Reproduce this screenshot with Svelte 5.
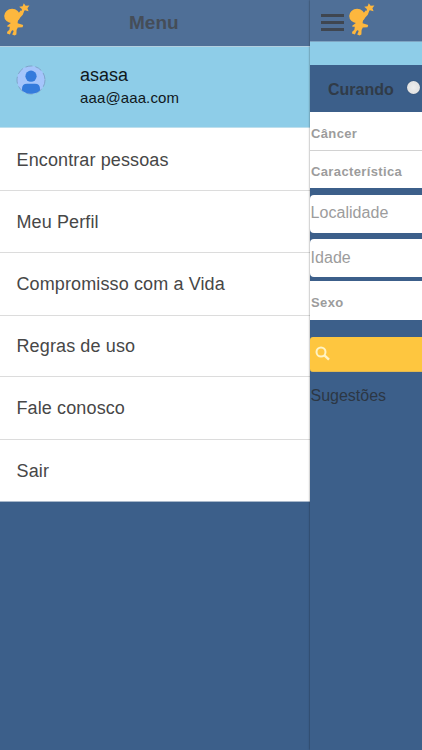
<script>
  const items = [
    { label: 'Encontrar pessoas', height: 63 },
    { label: 'Meu Perfil', height: 62 },
    { label: 'Compromisso com a Vida', height: 63 },
    { label: 'Regras de uso', height: 61 },
    { label: 'Fale conosco', height: 63 },
    { label: 'Sair', height: 62 }
  ];
</script>

{#snippet mascot()}
  <svg class="mascot" width="26" height="34" viewBox="0 0 26 34" fill="#fdb73e">
    <path d="M19.8 0.2 L21.6 2.8 L25.4 2.4 L23.4 5.2 L24.6 8.2 L21 7.3 L18 9.4 L17.8 6 L15.2 3.8 L18.6 3.2 Z" />
    <ellipse cx="8.1" cy="12.9" rx="7.9" ry="7.1" />
    <path d="M12.5 13 L16.6 7.4 L20.2 8 L18.8 11.8 L14 17 L13.6 20.2 L19.2 22.1 L18.6 24.2 L13.8 24.6 L12.6 27 L12.4 31.4 L10.6 32.4 L8.2 31.4 L9.6 28.4 L9 27 L7.5 28 L5.9 31.4 L3 30.6 L3.2 28.8 L5.4 26.8 L5.8 23.8 L3.4 23.8 L3.2 22.8 L6.6 20.3 L6.2 18 Z" />
  </svg>
{/snippet}

<div class="app">
  <aside class="drawer">
    <header class="menu-head">
      {@render mascot()}
      <h1>Menu</h1>
    </header>
    <div class="profile">
      <svg class="avatar" width="30" height="30" viewBox="0 0 30 30">
        <defs><clipPath id="disc"><circle cx="15" cy="15" r="13.8" /></clipPath></defs>
        <circle cx="15" cy="15" r="14" fill="#a5c5fb" stroke="#7293b8" stroke-width=".7" stroke-dasharray="7 3" />
        <g clip-path="url(#disc)" fill="#347bdc">
          <circle cx="15" cy="11.2" r="5.6" />
          <path d="M6 30 V24 Q6 18.8 11 18.8 H19 Q24 18.8 24 24 V30 Z" />
        </g>
      </svg>
      <div class="who">
        <span class="name">asasa</span>
        <span class="mail">aaa@aaa.com</span>
      </div>
    </div>
    <nav>
      {#each items as item}
        <div class="item" style="height: {item.height}px"><span>{item.label}</span></div>
      {/each}
    </nav>
  </aside>

  <main class="page">
    <header class="page-head">
      <div class="bars"><i></i><i></i><i></i></div>
      {@render mascot()}
    </header>
    <div class="strip"></div>
    <div class="title"><span>Curando</span><i class="knob"></i></div>
    <div class="field cancer"><b>Câncer</b></div>
    <div class="field feature"><b>Característica</b></div>
    <div class="field input"><span>Localidade</span></div>
    <div class="field input second"><span>Idade</span></div>
    <div class="field sex"><b>Sexo</b></div>
    <div class="search">
      <svg width="16" height="16" viewBox="0 0 16 16" fill="none" stroke="#fff3c4">
        <circle cx="6" cy="6" r="4.5" stroke-width="2" />
        <path d="M9.2 9.2 L14 13.6" stroke-width="2.4" />
      </svg>
    </div>
    <div class="suggest"><span>Sugestões</span></div>
  </main>
</div>

<style>
  :global(body) { margin: 0; }
  .app {
    display: flex;
    width: 422px;
    height: 750px;
    overflow: hidden;
    background: #3c5f8a;
    font-family: "Liberation Sans", Arial, sans-serif;
  }
  .app * { box-sizing: border-box; }
  .mascot { display: block; flex: none; }
  .drawer { width: 310px; flex: none; }
  .menu-head {
    height: 47px;
    display: flex;
    align-items: flex-start;
    padding: 3px 0 0 4px;
    background: #4f6f97;
    border-bottom: 1px solid #b3cfdf;
  }
  h1 {
    margin: 8px 0 0 99px;
    font-size: 19px;
    line-height: 24px;
    font-weight: bold;
    color: #454d58;
  }
  .profile {
    height: 81px;
    display: flex;
    align-items: flex-start;
    padding: 18px 0 0 16px;
    background: #8ecde8;
    border-bottom: 1px solid #bedfed;
    color: #10181c;
  }
  .who { display: flex; flex-direction: column; margin-left: 34px; }
  .name { font-size: 18px; line-height: 22px; margin-top: -1px; }
  .mail { font-size: 15px; line-height: 20px; margin-top: 2px; letter-spacing: 0.12px; }
  .item {
    display: flex;
    align-items: center;
    padding: 1px 0 0 16.5px;
    background: #fff;
    border-bottom: 1px solid #dcdcdc;
    font-size: 18px;
    letter-spacing: 0.12px;
    color: #474747;
    white-space: nowrap;
  }
  .item:first-child { padding-top: 2px; }
  .item:last-child { border-bottom-color: #a9b8ca; }
  .page {
    width: 112px;
    flex: none;
    height: 750px;
    background: #3c5f8a;
    box-shadow: 0 0 2px rgba(0, 0, 0, 0.5);
  }
  .page-head {
    height: 42px;
    display: flex;
    align-items: flex-start;
    padding: 3px 0 0 11px;
    background: #4f6f97;
    border-bottom: 1px solid #7fa5c2;
  }
  .bars {
    width: 23px;
    display: flex;
    flex-direction: column;
    gap: 4.5px;
    margin: 11px 5px 0 0;
  }
  .bars i { height: 2.5px; background: #3f4650; }
  .strip { height: 23px; background: #8ecde8; }
  .title {
    height: 47px;
    display: flex;
    align-items: flex-start;
    padding: 16px 0 0 18px;
    font-size: 16px;
    line-height: 18px;
    font-weight: bold;
    color: #303b48;
  }
  .title span { width: 79px; flex: none; }
  .knob {
    flex: none;
    width: 13px;
    height: 13px;
    border-radius: 50%;
    background: radial-gradient(#eee, #dcdcdc);
    box-shadow: 0 0 1px #26384c;
  }
  .field {
    display: flex;
    align-items: center;
    padding-left: 1px;
    background: #fff;
    color: #9c9c9c;
    font-size: 13px;
    letter-spacing: 0.37px;
    white-space: nowrap;
  }
  .cancer { height: 39px; padding-top: 5px; border-bottom: 1px solid #d2d2d2; }
  .feature { height: 37px; padding-top: 3px; }
  .input {
    height: 38px;
    margin-top: 7px;
    padding-left: 0.5px;
    padding-bottom: 2px;
    border-radius: 4px 0 0 4px;
    font-size: 16px;
    letter-spacing: 0.05px;
  }
  .second { margin-top: 6px; padding-bottom: 1px; }
  .sex { margin-top: 4px; height: 39px; padding-top: 3px; }
  .search {
    margin-top: 17px;
    height: 35px;
    padding: 9px 0 0 5px;
    border-radius: 3px 0 0 3px;
    background: #fec63f;
    border-bottom: 1px solid #e2b84f;
  }
  .search svg { display: block; }
  .suggest { margin-top: 14px; padding-left: 0.5px; font-size: 16px; line-height: 20px; color: #2c3744; }
</style>
